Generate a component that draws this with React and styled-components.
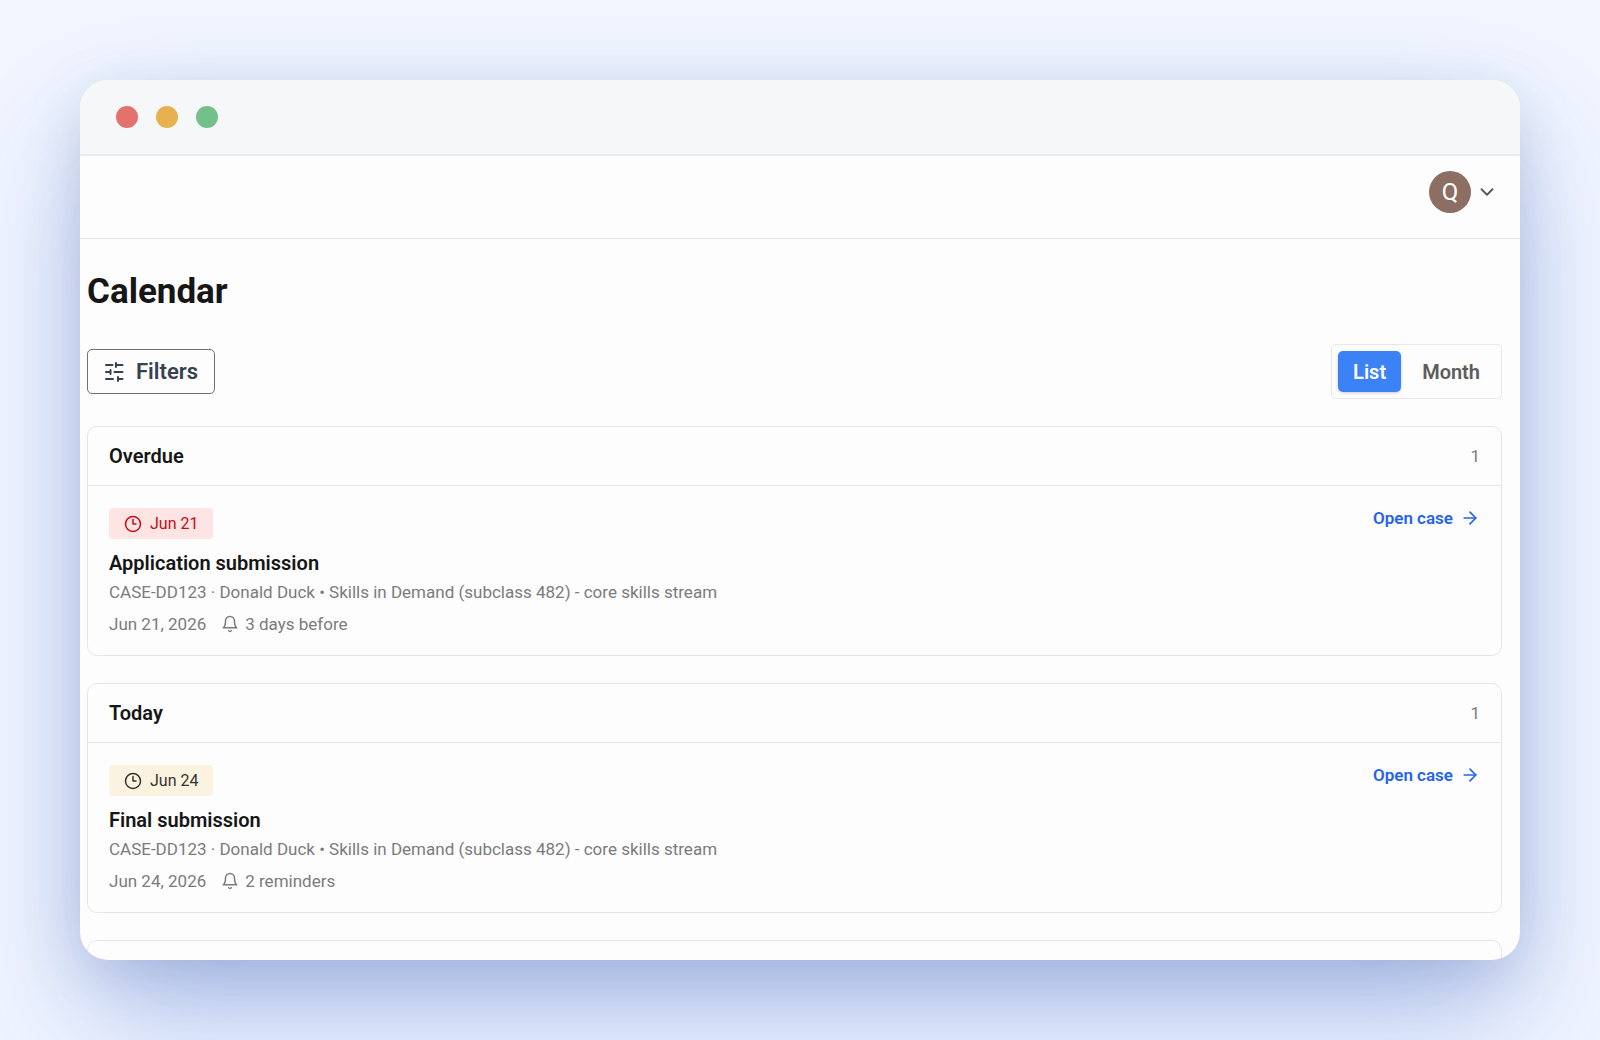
import React from 'react'
import styled, { createGlobalStyle } from 'styled-components'
import { ArrowRight, ChevronDown, Clock3 } from 'lucide-react'

const GlobalStyle = createGlobalStyle`
* {
box-sizing: border-box;
}
body {
margin: 0;
background: #f0f5ff;
font-family: Roboto, "Liberation Sans", sans-serif;
color: #161616;
}
button {
font-family: inherit;
cursor: pointer;
}
h1, h2, h3, p {
margin: 0;
}
`

const Stage = styled.div`
display: flex;
height: 100vh;
padding: 80px;
overflow: hidden;
`

const Window = styled.div`
flex: 1;
display: flex;
flex-direction: column;
overflow: hidden;
border-radius: 28px;
background: #fdfdfd;
box-shadow: 0 64px 130px -8px rgba(37, 84, 200, 0.3), 0 16px 64px -8px rgba(30, 50, 100, 0.22);
`

const TitleBar = styled.div`
flex: none;
display: flex;
align-items: center;
gap: 18px;
height: 76px;
padding: 0 36px;
background: #f6f7f9;
border-bottom: 2px solid #e9eaec;
`

const Dot = styled.span`
width: 22px;
height: 22px;
border-radius: 50%;
background: ${({ $color }) => $color};
`

const TopBar = styled.header`
flex: none;
display: flex;
justify-content: flex-end;
align-items: flex-start;
height: 83px;
padding: 15px 22px;
border-bottom: 1px solid #e6e6e7;
`

const UserButton = styled.button`
display: flex;
align-items: center;
gap: 5px;
padding: 0;
border: none;
background: none;
color: #555;
`

const Avatar = styled.span`
display: flex;
justify-content: center;
align-items: center;
width: 42px;
height: 42px;
border-radius: 50%;
background: #8d6e63;
color: white;
font-size: 24px;
`

const Content = styled.main`
flex: 1;
min-height: 0;
overflow: hidden;
padding: 32px 18px 0 7px;
`

const PageTitle = styled.h1`
font-size: 35px;
line-height: 42px;
font-weight: 700;
`

const Toolbar = styled.div`
display: flex;
justify-content: space-between;
align-items: center;
margin: 31px 0 27px;
`

const FilterButton = styled.button`
display: flex;
align-items: center;
gap: 12px;
height: 45px;
padding: 0 16px;
border: 1px solid #6b7080;
border-radius: 5px;
background: none;
color: #374151;
font-size: 22px;
font-weight: 600;
`

const Toggle = styled.div`
display: flex;
gap: 6px;
padding: 6px;
border: 1px solid #e8e8e9;
border-radius: 5px;
`

const ToggleButton = styled.button`
height: 41px;
padding: 0 15px;
border: none;
border-radius: 5px;
background: ${({ $active }) => ($active ? '#3b82f6' : 'none')};
box-shadow: ${({ $active }) => ($active ? '0 1px 3px rgba(0, 0, 0, 0.2)' : 'none')};
color: ${({ $active }) => ($active ? 'white' : '#5c5c5c')};
font-size: 20px;
font-weight: 600;
`

const Groups = styled.div`
display: flex;
flex-direction: column;
gap: 27px;
`

const Card = styled.section`
border: 1px solid #e6e6e7;
border-radius: 10px;
`

const CardHeader = styled.div`
display: flex;
justify-content: space-between;
align-items: center;
height: 59px;
padding: 0 21px;
border-bottom: 1px solid #e6e6e7;
`

const CardTitle = styled.h2`
font-size: 20px;
font-weight: 600;
`

const Count = styled.span`
font-size: 17px;
color: #7b7b7b;
`

const CardBody = styled.div`
display: flex;
justify-content: space-between;
align-items: flex-start;
padding: 22px 21px 19px;
`

const Badge = styled.span`
display: flex;
align-items: center;
gap: 8px;
width: fit-content;
height: 31px;
padding: 0 15px;
border-radius: 4px;
background: ${({ $late }) => ($late ? '#ffe4e4' : '#fbf3e0')};
color: ${({ $late }) => ($late ? '#c90a14' : '#333')};
font-size: 16px;
`

const TaskTitle = styled.h3`
margin-top: 11px;
font-size: 20px;
line-height: 26px;
font-weight: 600;
`

const CaseLine = styled.p`
margin-top: 4px;
font-size: 17px;
line-height: 24px;
color: #7b7b7b;
`

const Meta = styled.div`
display: flex;
align-items: center;
gap: 15px;
margin-top: 8px;
font-size: 17px;
line-height: 24px;
color: #7b7b7b;
`

const Reminder = styled.span`
display: flex;
align-items: center;
gap: 6px;
`

const OpenLink = styled.a`
display: flex;
align-items: center;
gap: 7px;
color: #2563eb;
font-size: 17px;
line-height: 20px;
font-weight: 600;
text-decoration: none;
`

const groups = [
    { name: 'Overdue', badge: 'Jun 21', late: true, title: 'Application submission', date: 'Jun 21, 2026', reminder: '3 days before' },
    { name: 'Today', badge: 'Jun 24', late: false, title: 'Final submission', date: 'Jun 24, 2026', reminder: '2 reminders' },
]

const TuneIcon = () => (
    <svg width="20" height="20" viewBox="0 0 20 20" fill="none" stroke="currentColor" strokeWidth="2" strokeLinecap="round" aria-hidden="true">
        <path d="M2 3h6.5M12 1v4M12 3h6.5M2 10h4.5M6.5 8v4M10.5 10h8M2 17h7M14 15v4M14 17h4.5" />
    </svg>
)

const BellIcon = () => (
    <svg width="18" height="18" viewBox="0 0 24 24" fill="none" stroke="currentColor" strokeWidth="2" strokeLinecap="round" strokeLinejoin="round" aria-hidden="true">
        <path d="M6 8a6 6 0 0 1 12 0c0 7 3 9 3 9H3s3-2 3-9" />
        <path d="M10.3 21a1.94 1.94 0 0 0 3.4 0" />
    </svg>
)

function Group({ group }) {
    return (
        <Card>
            <CardHeader>
                <CardTitle>{group.name}</CardTitle>
                <Count>1</Count>
            </CardHeader>
            <CardBody>
                <div>
                    <Badge $late={group.late}><Clock3 size={18} />{group.badge}</Badge>
                    <TaskTitle>{group.title}</TaskTitle>
                    <CaseLine>CASE-DD123 · Donald Duck • Skills in Demand (subclass 482) - core skills stream</CaseLine>
                    <Meta>
                        <span>{group.date}</span>
                        <Reminder><BellIcon />{group.reminder}</Reminder>
                    </Meta>
                </div>
                <OpenLink href="#case">Open case <ArrowRight size={20} /></OpenLink>
            </CardBody>
        </Card>
    )
}

function App() {
    return (
        <Stage>
            <GlobalStyle />
            <Window>
                <TitleBar>
                    <Dot $color="#e2726b" />
                    <Dot $color="#e8b14f" />
                    <Dot $color="#74c08b" />
                </TitleBar>
                <TopBar>
                    <UserButton aria-label="Account menu">
                        <Avatar>Q</Avatar>
                        <ChevronDown size={22} />
                    </UserButton>
                </TopBar>
                <Content>
                    <PageTitle>Calendar</PageTitle>
                    <Toolbar>
                        <FilterButton><TuneIcon />Filters</FilterButton>
                        <Toggle>
                            <ToggleButton $active aria-pressed="true">List</ToggleButton>
                            <ToggleButton aria-pressed="false">Month</ToggleButton>
                        </Toggle>
                    </Toolbar>
                    <Groups>
                        {groups.map((group) => <Group key={group.name} group={group} />)}
                        <Card><CardHeader /></Card>
                    </Groups>
                </Content>
            </Window>
        </Stage>
    )
}

export default App
